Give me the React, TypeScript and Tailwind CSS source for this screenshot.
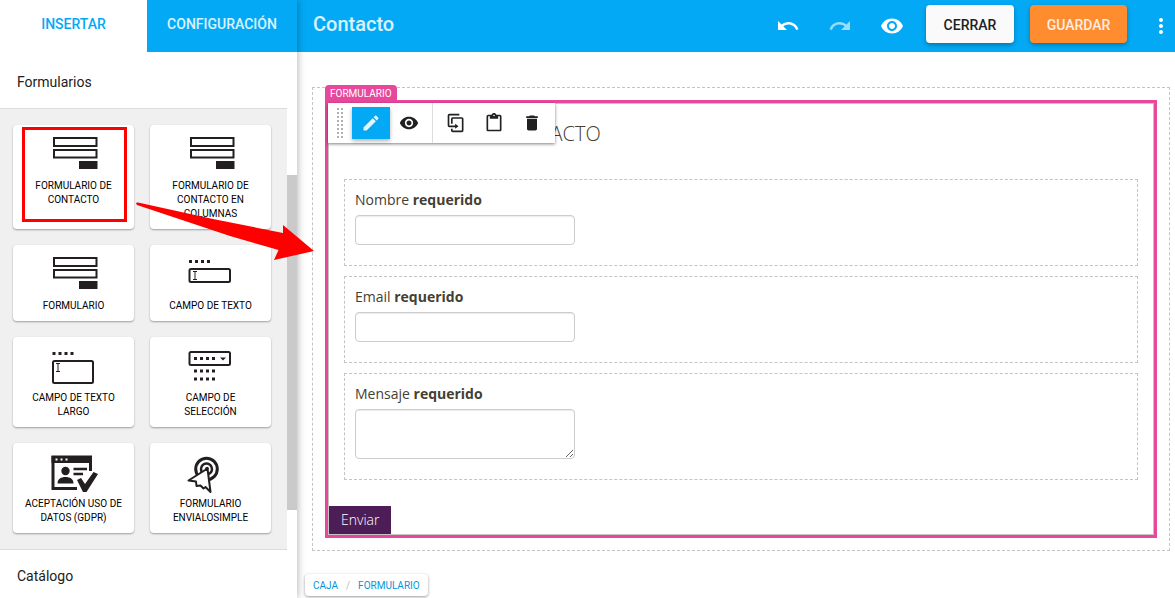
import type { ReactNode } from 'react'
import { clsx } from 'clsx'
import { MdContentPaste, MdDelete, MdEdit, MdMoreVert, MdRedo, MdUndo, MdVisibility } from 'react-icons/md'

const INK = '#231f20'

function Dots({ x, y }: { x: number; y: number }) {
  return (
    <g fill={INK}>
      {[0, 6, 12, 18].map((dx) => (
        <rect key={dx} x={x + dx} y={y} width="3" height="3" />
      ))}
    </g>
  )
}

function TextCursor({ x, y }: { x: number; y: number }) {
  return <path d={`M${x} ${y}h4M${x + 2} ${y}v8M${x} ${y + 8}h4`} stroke={INK} strokeWidth="1" fill="none" />
}

function WidgetSvg({ children }: { children: ReactNode }) {
  return (
    <svg width="49" height="42" viewBox="0 0 49 42" fill="none" aria-hidden="true">
      {children}
    </svg>
  )
}

function FormIcon() {
  return (
    <WidgetSvg>
      <rect x="5" y="1" width="42.5" height="8" stroke={INK} strokeWidth="2" />
      <rect x="5" y="13" width="42.5" height="7.5" stroke={INK} strokeWidth="2" />
      <rect x="30" y="24" width="18.5" height="8" fill={INK} />
    </WidgetSvg>
  )
}

function TextFieldIcon() {
  return (
    <WidgetSvg>
      <Dots x={3} y={3} />
      <rect x="3.5" y="12" width="40.5" height="13" rx="1.5" stroke={INK} strokeWidth="2" />
      <TextCursor x={7} y={14.5} />
    </WidgetSvg>
  )
}

function TextAreaIcon() {
  return (
    <WidgetSvg>
      <Dots x={3.5} y={3} />
      <rect x="4" y="12" width="40" height="22" rx="1.5" stroke={INK} strokeWidth="2" />
      <TextCursor x={7} y={14.5} />
    </WidgetSvg>
  )
}

function SelectIcon() {
  return (
    <WidgetSvg>
      <rect x="3.5" y="3" width="40.5" height="13" rx="1.5" stroke={INK} strokeWidth="2" />
      <Dots x={8} y={8} />
      <path d="M34 8.5h6l-3 3z" fill={INK} />
      <Dots x={8} y={20.5} />
      <Dots x={8} y={28.5} />
    </WidgetSvg>
  )
}

function ConsentIcon() {
  return (
    <WidgetSvg>
      <path d="M28 33.5H4V2h37.500v14" stroke={INK} strokeWidth="3" />
      <path d="M2.500 1H43v7H2.500z" fill={INK} />
      <path d="M6.500 3.500h2v2h-2zM11.500 3.500h2v2h-2zM16.500 3.500h2v2h-2z" fill="#fff" />
      <circle cx="16.500" cy="16" r="4.200" fill={INK} />
      <path d="M8.500 28.500c0-4.500 3.500-6.500 8-6.500s8 2 8 6.500z" fill={INK} />
      <path d="M24.500 14h13.500M24.500 19h9.500" stroke={INK} strokeWidth="2.500" />
      <path d="M28 25l4-2 4 6 8.500-12 4.500 2-11.500 18h-3.500z" fill={INK} />
    </WidgetSvg>
  )
}

function TargetIcon() {
  return (
    <WidgetSvg>
      <circle cx="20.500" cy="14" r="10.800" stroke={INK} strokeWidth="3" />
      <circle cx="20.500" cy="14" r="5.500" stroke={INK} strokeWidth="2.500" />
      <path
        d="M21.500 13.500L2.500 25.500l7.500 1 .5 4.500 4-.5 3 3 2-1.500 5 5z"
        fill="#fff"
        stroke={INK}
        strokeWidth="2"
        strokeLinejoin="round"
      />
      <circle cx="21" cy="13.500" r="1.800" fill={INK} />
    </WidgetSvg>
  )
}

const widgets = [
  { label: 'Formulario de contacto', icon: <FormIcon />, highlighted: true },
  { label: 'Formulario de contacto en columnas', icon: <FormIcon /> },
  { label: 'Formulario', icon: <FormIcon /> },
  { label: 'Campo de texto', icon: <TextFieldIcon /> },
  { label: 'Campo de texto largo', icon: <TextAreaIcon /> },
  { label: 'Campo de selección', icon: <SelectIcon /> },
  { label: 'Aceptación uso de datos (GDPR)', icon: <ConsentIcon /> },
  { label: 'Formulario Envialosimple', icon: <TargetIcon /> },
]

function WidgetCard({ label, icon, highlighted }: { label: string; icon: ReactNode; highlighted?: boolean }) {
  return (
    <button className="relative flex flex-col items-center justify-start rounded-sm bg-white px-2.5 pt-3 pb-2 shadow-[0_1px_2px_rgba(0,0,0,0.35)]">
      {icon}
      <span className="text-[10px] leading-[14px] text-black uppercase">{label}</span>
      {highlighted && <span className="absolute top-0.5 right-[7px] bottom-[7px] left-[9px] border-[3px] border-[#ff0000]" />}
    </button>
  )
}

function Sidebar() {
  return (
    <aside className="relative z-10 flex w-[297px] shrink-0 flex-col bg-white shadow-[0_0_8px_rgba(0,0,0,0.35)]">
      <nav className="flex h-[52px] shrink-0 text-sm font-medium">
        <button className="w-[147px] pb-1 text-[#03a9f4]">INSERTAR</button>
        <button className="flex-1 bg-[#03a9f4] pb-1 text-white/85">CONFIGURACIÓN</button>
      </nav>
      <div className="flex min-h-0 flex-1">
        <div className="flex-1 overflow-hidden text-[#212121]">
          <h2 className="px-[17px] pt-5 pb-4 text-sm leading-5">Formularios</h2>
          <div className="grid grid-cols-2 gap-4 border-y border-[#dcdcdc] bg-[#f0f0f0] py-4 pr-4 pl-[13px]">
            {widgets.map((widget) => (
              <WidgetCard key={widget.label} {...widget} />
            ))}
          </div>
          <h2 className="px-[17px] py-4 text-sm leading-5">Catálogo</h2>
        </div>
        {/* Scrollbar */}
        <div className="w-2.5 pt-[123px]">
          <div className="h-[335px] bg-[#cacaca]" />
        </div>
      </div>
    </aside>
  )
}

function Header() {
  return (
    <header className="flex h-[52px] shrink-0 items-center bg-[#03a9f4] pr-0.5 pb-1 pl-4 text-white">
      <h1 className="flex-1 text-xl font-medium text-white/85">Contacto</h1>
      <div className="flex items-center gap-7 pt-1">
        <button aria-label="Deshacer"><MdUndo size={24} /></button>
        <button aria-label="Rehacer" className="opacity-60"><MdRedo size={24} /></button>
        <button aria-label="Vista previa"><MdVisibility size={24} /></button>
      </div>
      <button className="ml-[22px] h-[38px] w-[88px] rounded-sm bg-[#fafafa] pt-0.5 text-sm font-medium text-[#212121] shadow-[0_2px_4px_rgba(0,0,0,0.3)]">
        CERRAR
      </button>
      <button className="ml-4 h-[38px] w-[97px] rounded-sm bg-[#ff8c2e] pt-0.5 text-sm font-medium text-white/85 shadow-[0_2px_4px_rgba(0,0,0,0.3)]">
        GUARDAR
      </button>
      <button aria-label="Más opciones" className="ml-[22px] pt-1"><MdMoreVert size={24} /></button>
    </header>
  )
}

function DuplicateIcon() {
  return (
    <svg width="20" height="20" viewBox="0 0 24 24" fill="currentColor" aria-hidden="true">
      <path d="M11,17H4A2,2 0 0,1 2,15V3A2,2 0 0,1 4,1H16V3H4V15H11V13L15,16L11,19V17M19,21V7H8V13H6V7A2,2 0 0,1 8,5H19A2,2 0 0,1 21,7V21A2,2 0 0,1 19,23H8A2,2 0 0,1 6,21V19H8V21H19Z" />
    </svg>
  )
}

function ToolButton({ label, active, children }: { label: string; active?: boolean; children: ReactNode }) {
  return (
    <button
      aria-label={label}
      className={clsx(
        'flex h-8 w-[38px] items-center justify-center',
        active ? 'bg-[#03a9f4] text-white/90 shadow-[0_2px_4px_rgba(0,0,0,0.3)]' : 'text-[#212121]',
      )}
    >
      {children}
    </button>
  )
}

function BlockToolbar() {
  return (
    <div className="absolute top-0 left-0 flex h-10 items-center bg-white shadow-[0_1px_3px_rgba(0,0,0,0.5)]">
      <span className="grid w-6 grid-cols-2 justify-center gap-0.5 px-[9px]">
        {Array.from({ length: 16 }, (_, i) => (
          <i key={i} className="size-0.5 bg-[#b0b0b0]" />
        ))}
      </span>
      <div className="flex h-full items-center border-r border-[#ddd] pr-1">
        <ToolButton label="Editar" active><MdEdit size={20} /></ToolButton>
        <ToolButton label="Mostrar"><MdVisibility size={20} /></ToolButton>
      </div>
      <div className="flex items-center pr-1 pl-1">
        <ToolButton label="Duplicar"><DuplicateIcon /></ToolButton>
        <ToolButton label="Pegar"><MdContentPaste size={20} /></ToolButton>
        <ToolButton label="Eliminar"><MdDelete size={20} /></ToolButton>
      </div>
    </div>
  )
}

const inputClass =
  'block w-[220px] rounded-sm border border-[#ccc] bg-white px-2 shadow-[inset_0_1px_1px_rgba(0,0,0,0.08)]'

function Field({ id, label, multiline }: { id: string; label: string; multiline?: boolean }) {
  return (
    <div className="border border-dashed border-[#c4c4c4] px-2.5 pt-2.5 pb-5">
      <label htmlFor={id} className="mb-[5px] block text-sm leading-5">
        {label} <strong>requerido</strong>
      </label>
      {multiline ? (
        <textarea id={id} className={clsx(inputClass, 'h-[50px] resize')} />
      ) : (
        <input id={id} type="text" className={clsx(inputClass, 'h-[30px]')} />
      )}
    </div>
  )
}

function Canvas() {
  return (
    <main className="flex-1 pt-[35px] pr-[5px] pl-[15px]">
      <div className="border border-dashed border-[#c4c4c4] p-3">
        <div className="relative border-[3px] border-[#e8489c]">
          <span className="absolute -top-[18px] -left-[3px] h-4 rounded-t-sm bg-[#e8489c] px-[5px] text-[10px] leading-[18px] text-white">
            FORMULARIO
          </span>
          <form
            className="border border-[#c4c4c4] font-['Open_Sans',sans-serif] text-[#444033]"
            onSubmit={(e) => e.preventDefault()}
          >
            <h2 className="px-2.5 pt-[15px] pb-[30px] text-xl leading-[30px] font-light">FORMULARIO DE CONTACTO</h2>
            <div className="flex flex-col gap-2.5 px-[15px] pb-[26px]">
              <Field id="nombre" label="Nombre" />
              <Field id="email" label="Email" />
              <Field id="mensaje" label="Mensaje" multiline />
            </div>
            <button type="submit" className="block h-7 bg-[#4c1d57] px-3 text-sm font-light text-white">
              Enviar
            </button>
          </form>
          <BlockToolbar />
        </div>
      </div>
    </main>
  )
}

function Breadcrumb() {
  return (
    <nav className="mb-0.5 ml-2 flex h-[22px] items-center gap-2 self-start rounded-sm bg-white px-2 text-[10px] text-[#0396d8] shadow-[0_1px_3px_rgba(0,0,0,0.4)]">
      <a href="#caja">CAJA</a>
      <span className="text-[#bbb]">/</span>
      <a href="#formulario">FORMULARIO</a>
    </nav>
  )
}

export default function App() {
  return (
    <div className="relative flex h-screen overflow-hidden bg-white font-[Roboto,sans-serif]">
      <Sidebar />
      <div className="flex min-w-0 flex-1 flex-col">
        <Header />
        <Canvas />
        <Breadcrumb />
      </div>
      {/* Pointer from the widget to its block on the canvas */}
      <svg
        className="pointer-events-none absolute top-[200px] left-[134px] z-20"
        width="182"
        height="64"
        viewBox="134 200 182 64"
        fill="#ff0000"
        aria-hidden="true"
      >
        <path d="M136 203.500Q136.500 202 138 202.500L213 219L283 233V225L314 251L274 260L278.500 250L230 236L137 205Z" />
      </svg>
    </div>
  )
}
